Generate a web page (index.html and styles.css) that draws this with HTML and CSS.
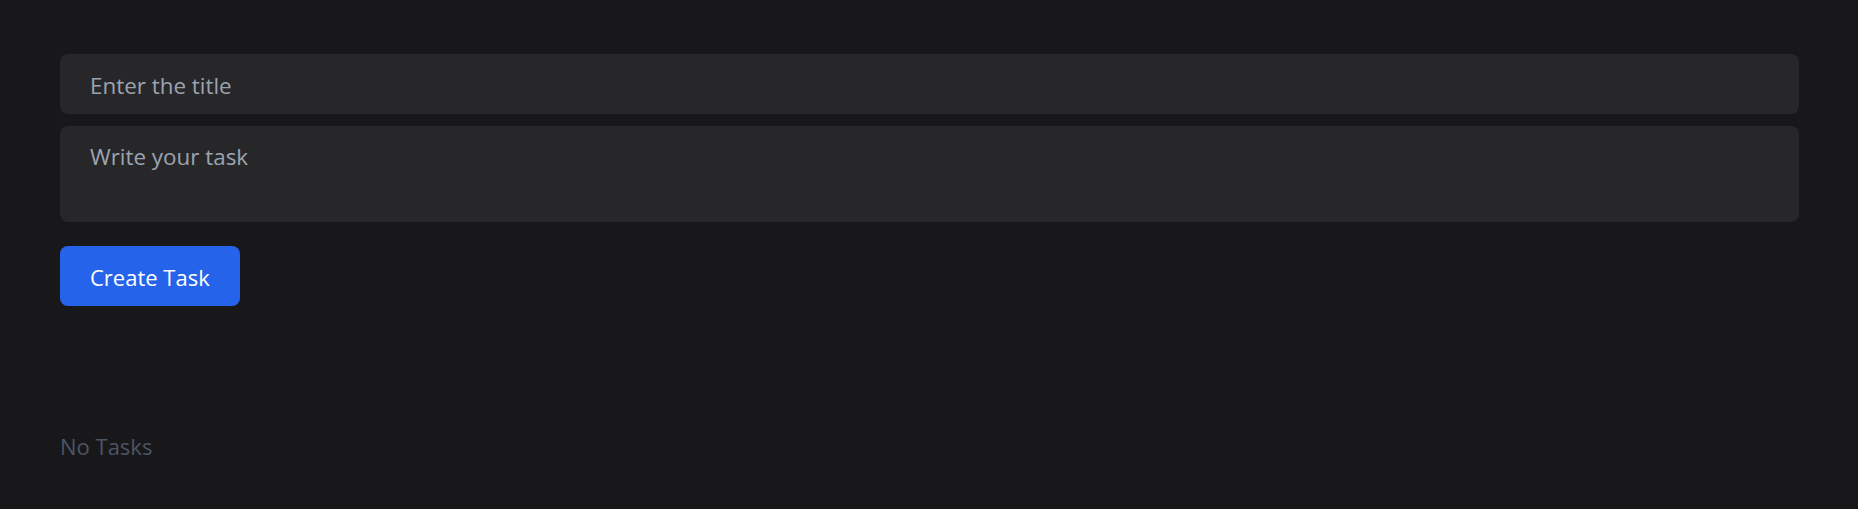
FILE: index.html
```html
<!DOCTYPE html>
<html lang="en">
<head>
<meta charset="utf-8">
<title>Tasks</title>
<link rel="stylesheet" href="styles.css">
</head>
<body>
<main class="page">
  <form class="task-form">
    <input class="field" type="text" placeholder="Enter the title">
    <textarea class="field field-area" rows="2" placeholder="Write your task"></textarea>
    <div class="actions">
      <button class="btn-primary" type="button">Create Task</button>
    </div>
  </form>
  <section class="task-list">
    <p class="empty">No Tasks</p>
  </section>
</main>
</body>
</html>
```
FILE: styles.css
```css
* { box-sizing: border-box; }
html, body {
  margin: 0;
  padding: 0;
  background: #18181b;
  height: 100%;
}
body {
  font-family: "Open Sans", "Noto Sans", sans-serif;
  font-size: 22px;
  line-height: 36px;
}
.page {
  padding: 54px 59px 0 60px;
}
.task-form {
  display: flex;
  flex-direction: column;
  gap: 12px;
}
.field {
  display: block;
  width: 100%;
  height: 60px;
  background: #27272a;
  border: none;
  border-radius: 8px;
  padding: 13px 30px 11px;
  font: inherit;
  font-size: 22.4px;
  color: #e5e7eb;
  outline: none;
  resize: none;
}
.field::placeholder { color: #9ca3af; opacity: 1; }
.field-area { height: 96px; }
.actions { margin-top: 12px; }
.btn-primary {
  height: 60px;
  background: #2563eb;
  color: #ffffff;
  border: none;
  border-radius: 8px;
  padding: 13px 30px 11px;
  font: inherit;
  cursor: pointer;
}
.task-list { margin-top: 122px; }
.empty {
  margin: 0;
  color: #4b5563;
}
```
